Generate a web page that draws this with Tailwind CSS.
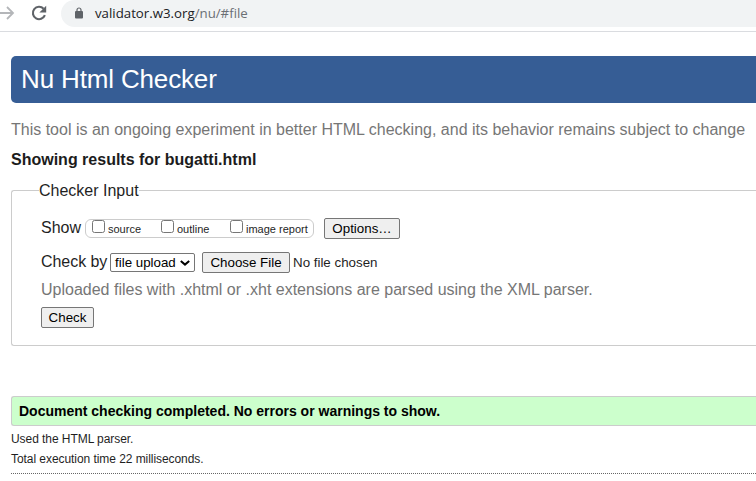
<!DOCTYPE html>
<html lang="en">
<head>
<meta charset="utf-8">
<title>Nu Html Checker</title>
<script src="https://cdn.jsdelivr.net/npm/@tailwindcss/browser@4"></script>
</head>
<body class="h-[481px] w-[756px] overflow-hidden bg-white font-['Liberation_Sans',Arial,sans-serif] text-base text-[#1f1f1f]">
<header class="flex h-8 items-start border-b border-[#dadce0] bg-white">
  <svg class="mt-[5px] h-4 w-[15px] shrink-0" viewBox="0 0 15 16" fill="none" stroke="#b4b6b9" stroke-width="1.8"><path d="M0 8H13M7 2l6 6-6 6"/></svg>
  <svg class="mt-[5px] ml-4 h-4 w-4 shrink-0" viewBox="0 0 16 16"><path d="M13.9 10.2A6.2 6.2 0 1 1 12.6 3.7" fill="none" stroke="#5f6368" stroke-width="2.1"/><path d="M15.2.8v6.8H8.4z" fill="#5f6368"/></svg>
  <div class="ml-[14px] flex h-[27px] flex-1 items-center rounded-l-full bg-[#f1f3f4]">
    <svg class="mb-[2px] ml-[14px] h-3 w-2 shrink-0" viewBox="0 0 8 12"><path d="M2 5V3a2 2 0 0 1 4 0v2" fill="none" stroke="#5f6368" stroke-width="1.2"/><rect y="4" width="8" height="7.5" rx="1" fill="#5f6368"/></svg>
    <span class="ml-3 whitespace-nowrap font-['Open_Sans',sans-serif] text-[13.25px] leading-[27px] text-[#202124]">validator.w3.org<span class="text-[#6b6f74]">/nu/#file</span></span>
  </div>
</header>
<main class="pt-6 pl-[11px]">
  <h1 class="h-[47px] rounded-l-[5px] bg-[#365d95] pl-[10px] text-[26px] leading-[46px] tracking-[-0.15px] text-white">Nu Html Checker</h1>
  <p class="mt-[18px] h-[18px] whitespace-nowrap leading-[18px] text-[#767676]">This tool is an ongoing experiment in better HTML checking, and its behavior remains subject to change</p>
  <h2 class="mt-3 h-[18px] font-bold leading-[18px] text-[#1c1c1c]">Showing results for bugatti.html</h2>
  <fieldset class="mt-3 h-[165px] rounded-l-[3px] border border-r-0 border-[#ccc] pl-[27px]">
    <legend class="h-[18px] leading-[20px]">Checker Input</legend>
    <div class="mt-[19px] ml-0.5 flex h-[21px] items-center">
      <span class="w-11 pb-0.5 leading-[18px]">Show</span>
      <div class="flex h-[19px] w-[229px] items-start rounded-md border border-[#ccc] pl-1.5 text-[11px] leading-[19px] whitespace-nowrap">
        <label class="flex w-[69px]"><input type="checkbox" class="mr-[3px] h-[13px] w-[13px] shrink-0">source</label>
        <label class="flex w-[69px]"><input type="checkbox" class="mr-[3px] h-[13px] w-[13px] shrink-0">outline</label>
        <label class="flex"><input type="checkbox" class="mr-[3px] h-[13px] w-[13px] shrink-0">image report</label>
      </div>
      <button class="ml-2.5 h-[21px] w-[76px] rounded-[2px] border border-[#767676] bg-[#efefef] text-[13.333px] leading-[19px] text-black">Options…</button>
    </div>
    <div class="mt-[13px] ml-0.5 flex h-[21px] items-center whitespace-nowrap">
      <span class="w-[69px] pb-0.5 leading-[18px] tracking-[-0.05px]">Check by</span>
      <div class="flex h-[19px] w-[85px] items-center rounded-[2px] border border-[#767676] bg-white pl-1 text-[13.333px] leading-[17px] text-black">
        <span class="w-[65px]">file upload</span>
        <svg class="h-[6px] w-[10px]" viewBox="0 0 10 6" fill="none" stroke="#000" stroke-width="2"><path d="M.8 1L5 4.6 9.2 1"/></svg>
      </div>
      <button class="ml-[7px] h-[21px] w-[88px] rounded-[2px] border border-[#767676] bg-[#efefef] text-[13.333px] leading-[19px] text-black">Choose File</button>
      <span class="ml-[3px] text-[13.333px]">No file chosen</span>
    </div>
    <p class="mt-2 ml-0.5 h-[18px] leading-[18px] text-[#767676]">Uploaded files with .xhtml or .xht extensions are parsed using the XML parser.</p>
    <button class="mt-2 ml-0.5 block h-[21px] w-[53px] rounded-[2px] border border-[#767676] bg-[#efefef] text-[13.333px] leading-[19px] text-black">Check</button>
  </fieldset>
  <p class="mt-[50px] h-[30px] rounded-l-[3px] border border-r-0 border-[#ccc] bg-[#ccffcc] pl-[7px] text-[14px] font-bold leading-[28px] text-black">Document checking completed. No errors or warnings to show.</p>
  <div class="h-[47px] pt-[3px] text-xs leading-5 tracking-[-0.06px]"><p>Used the HTML parser.</p><p>Total execution time 22 milliseconds.</p></div>
  <div class="h-px bg-[repeating-linear-gradient(90deg,#666_0_1px,#fff_1px_2px)]"></div>
</main>
</body>
</html>
